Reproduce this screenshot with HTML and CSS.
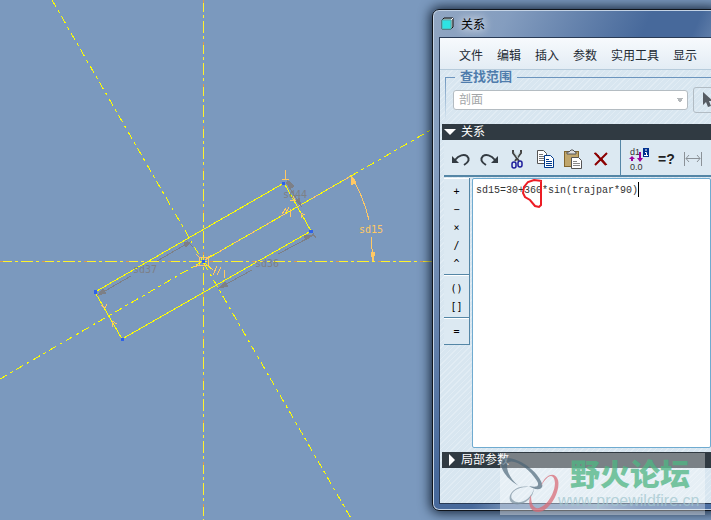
FILE: index.html
```html
<!DOCTYPE html>
<html lang="zh-CN">
<head>
  <meta charset="utf-8">
  <title>关系</title>
  <link rel="stylesheet" href="styles.css">
</head>
<body>
  <main class="workspace">
    <svg class="sketch" width="711" height="520" viewBox="0 0 711 520" role="img" aria-label="草绘">
      <!-- axes -->
      <g class="axis">
        <path d="M203 0V520M0 261H711"/>
        <path class="axis-tint" d="M203 0V520M0 261H711"/>
      </g>
      <g class="center-line">
        <path d="M52 0L352 520M0 379L203 261M351 176L455 116"/>
      </g>
      <!-- section -->
      <path class="outline" d="M95 292L284 183L311 231L122 339ZM203 261L351 176"/>
      <path class="tinted" d="M203 261L351 176"/>
      <!-- weak dimensions -->
      <g class="weak">
        <path d="M98 295L131 276M157 261L190 242M186 240L193 247M219 288L252 270M278 254L314 235M311 230L316 238M286 182L301 206"/>
        <path class="fill" d="M98 295L103 289L106 293ZM190 242L184 243L186 247ZM219 288L225 282L228 286ZM312 235L304 236L306 240ZM287 180L294 186L290 189ZM301 206L299 198L296 201Z"/>
        <text x="133" y="273">sd37</text>
        <text x="255" y="267">sd36</text>
        <text x="283" y="198">sd44</text>
      </g>
      <!-- angle dimension and constraints -->
      <g class="strong">
        <path d="M351 176Q363 195 369 220M371 237L373 261M285 170V179M282 179H289M101 305L105 308L107 304M112 327L112 321L117 324M290 200H295L293 196M301 218V213L305 215M282 214L286 208M285 214L289 207M290 209V217M213 275L217 266M217 275L221 267M224 270V278"/>
        <path class="fill" d="M351 176L356 182L352 185ZM373 261L371 252L375 252Z"/>
        <text x="359" y="233">sd15</text>
        <path d="M199 257H208V265H199ZM199 257L196 254M208 265L213 270M199 265L194 267M208 257L212 255"/>
      </g>
      <path class="outline" d="M203 261L196 265M203 261L211 269"/>
      <g class="points">
        <rect x="94" y="290" width="3" height="4"/>
        <rect x="121" y="338" width="3" height="3"/>
        <rect x="282" y="182" width="3" height="3"/>
        <rect x="309" y="230" width="4" height="3"/>
        <rect x="202" y="260" width="3" height="3"/>
      </g>
    </svg>

    <section class="dialog" aria-label="关系">
      <header class="title-bar">
        <svg width="13" height="13" viewBox="0 0 13 13" aria-hidden="true">
          <path d="M1 3L3 1H12V10L10 12H1Z" fill="#aab4b8" stroke="#111"/>
          <path d="M1 3H10V12H1Z" fill="#2de3e3" stroke="#5aa"/>
          <path d="M10 3L12 1" stroke="#fff"/>
        </svg>
        <span class="title">关系</span>
      </header>
      <div class="client">
        <nav class="menu">
          <button>文件</button>
          <button>编辑</button>
          <button>插入</button>
          <button>参数</button>
          <button>实用工具</button>
          <button>显示</button>
        </nav>
        <fieldset class="scope">
          <legend>查找范围</legend>
          <div class="scope-row">
            <select aria-label="查找范围" disabled>
              <option>剖面</option>
            </select>
            <button class="pick" aria-label="选取">
              <svg width="14" height="18" viewBox="0 0 14 18"><path d="M1 1V14L4 11L6 16L9 15L7 10H11Z" fill="#555b62"/></svg>
            </button>
          </div>
        </fieldset>
        <button class="section-bar" aria-expanded="true"><span class="arrow-down"></span>关系</button>
        <div class="toolbar">
          <div class="tools">
            <button aria-label="撤消">
              <svg width="20" height="20" viewBox="0 0 20 20"><path d="M1 7V14H8Z" fill="#333b42"/><path d="M4 11C8 6 13 5 16 7C19 10 18 13 13 16" fill="none" stroke="#333b42" stroke-width="2"/></svg>
            </button>
            <button aria-label="重做">
              <svg width="20" height="20" viewBox="0 0 20 20"><path d="M19 7V14H12Z" fill="#333b42"/><path d="M16 11C12 6 7 5 4 7C1 10 2 13 7 16" fill="none" stroke="#333b42" stroke-width="2"/></svg>
            </button>
            <button aria-label="剪切">
              <svg width="20" height="20" viewBox="0 0 20 20" fill="none"><path d="M6 1V4L12 12M14 1V4L8 12" stroke="#444" stroke-width="2"/><path d="M7 3L11 9M13 3L10 8" stroke="#bcc"/><rect x="5" y="13" width="4" height="6" rx="2" stroke="#1d1d9c" stroke-width="1.5"/><rect x="11" y="12" width="4" height="6" rx="2" stroke="#1d1d9c" stroke-width="1.5"/></svg>
            </button>
            <button aria-label="复制">
              <svg width="20" height="20" viewBox="0 0 20 20"><path d="M2.500 1.500H8.500L11.500 4.500V14.500H2.500Z" fill="#fff" stroke="#555"/><path d="M4 5.500H8M4 7.500H9M4 9.500H9M4 11.500H9" stroke="#777"/><path d="M9.500 6.500H15.500L18.500 9.500V18.500H9.500Z" fill="#fff" stroke="#003a8c"/><path d="M11 10.500H14M11 12.500H17M11 14.500H17M11 16.500H17" stroke="#003a8c"/></svg>
            </button>
            <button aria-label="粘贴">
              <svg width="20" height="20" viewBox="0 0 20 20"><rect x="1.500" y="2.500" width="14" height="15" fill="#c0a66c" stroke="#82662e"/><path d="M4 5V3H6L8 1H10L12 3H13V5Z" fill="#ddd" stroke="#555"/><path d="M8.500 8.500H15.500L18.500 11.500V19.500H8.500Z" fill="#fff" stroke="#555"/><path d="M10 12.500H14M10 14.500H17M10 16.500H17" stroke="#888"/></svg>
            </button>
            <button aria-label="删除">
              <svg width="20" height="20" viewBox="0 0 20 20"><path d="M4 4L15 16M16 4L4 16" stroke="#8b0000" stroke-width="2"/><path d="M3 4L8 7M11 10L16 16" stroke="#8b0000"/></svg>
            </button>
          </div>
          <div class="tools">
            <button aria-label="切换尺寸">
              <svg width="22" height="24" viewBox="0 0 22 24"><text class="glyph" x="2" y="8">d1</text><text class="glyph" x="2" y="23">0.0</text><path d="M4 10V14M12 5V12" stroke="#9b009b" stroke-width="2"/><path d="M1 12L4 9L7 12ZM9 11H15L12 15Z" fill="#9b009b"/><rect x="15" y="1" width="6" height="9" fill="#00308f"/><path d="M18 2V4M17 5.500H18.500V8M16 8.500H20" stroke="#fff" fill="none"/></svg>
            </button>
            <button class="eval" aria-label="计算">=?</button>
            <button aria-label="测量">
              <svg width="20" height="20" viewBox="0 0 20 20" fill="none" stroke="#8b9298"><path d="M1.500 3V17M18.500 3V17M3 9.500H17M6 6L3 9.500L6 13M14 6L17 9.500L14 13"/></svg>
            </button>
          </div>
        </div>
        <div class="editor">
          <div class="operators">
            <div class="group">
              <button>+</button><button>−</button><button>×</button><button>/</button><button>^</button>
            </div>
            <div class="group">
              <button>()</button><button>[]</button>
            </div>
            <div class="group">
              <button>=</button>
            </div>
          </div>
          <div class="code">
            <textarea aria-label="关系式" spellcheck="false">sd15=30+360*sin(trajpar*90)</textarea>
            <span class="caret"></span>
            <!-- red pen mark round the amplitude -->
            <svg class="pen" width="24" height="34" viewBox="0 0 24 34" aria-hidden="true"><path d="M20 3L12 2L6 4L2 9L1 15L3 19L8 22L13 28L17 29L19 27V3" /></svg>
          </div>
        </div>
        <button class="section-bar" aria-expanded="false"><span class="arrow-right"></span>局部参数</button>
      </div>
    </section>

    <aside class="watermark">
      <svg width="66" height="62" viewBox="0 0 66 62" aria-hidden="true">
        <path d="M19 33C-1 22 -4 3 9 5C29 8 45 29 42 34C40 38 33 36 29 33C37 35 40 33 37 28C30 16 15 6 9 9C4 12 9 26 19 33Z" fill="#496477" opacity=".9"/>
        <path d="M29 34C14 33 8 43 13 47C19 53 32 46 34 35C34 47 18 56 11 49C6 43 15 31 29 34Z" fill="#8296a4"/>
        <path d="M41 33C45 21 55 18 58 27C61 39 49 59 38 59C30 59 27 50 31 42C31 52 34 56 39 55C50 52 59 31 53 24C50 21 46 25 41 33Z" fill="#d96d78"/>
      </svg>
      <div class="watermark-text">
        <strong>野火论坛</strong>
        <span>www.proewildfire.cn</span>
      </div>
    </aside>
  </main>
</body>
</html>
```

FILE: styles.css
```css
* {
  box-sizing: border-box;
}

body {
  margin: 0;
  background: #7b99be;
  font-family: "Liberation Sans", "Noto Sans CJK SC", sans-serif;
  font-size: 12px;
}

button {
  padding: 0;
  border: none;
  background: none;
  font: inherit;
  color: inherit;
}

.workspace {
  position: relative;
  height: 100vh;
  overflow: hidden;
}

/* Sketch */
.sketch {
  display: block;
  fill: none;
  shape-rendering: crispEdges;
}

.axis {
  stroke: #fff22c;
  stroke-dasharray: 12 3 3 3;
}

.axis-tint {
  stroke: #d99a4c;
  stroke-dasharray: 3 39;
}

.center-line {
  stroke: #ff0;
  stroke-dasharray: 8 4 3 4;
}

.outline {
  stroke: #ff0;
}

.tinted {
  stroke: #ffc864;
  stroke-dasharray: 6 12;
}

.weak {
  stroke: #7d8087;
}

.weak .fill,
.weak text {
  fill: #7d8087;
}

.strong {
  stroke: #ffc864;
}

.strong .fill,
.strong text {
  fill: #ffc864;
}

.sketch text {
  stroke: none;
  font-family: "DejaVu Sans Mono", monospace;
  font-size: 10px;
}

.points {
  fill: #2f62e8;
}

/* Dialog window */
.dialog {
  position: absolute;
  top: 9px;
  right: -8px;
  bottom: 9px;
  left: 432px;
  display: flex;
  flex-direction: column;
  padding: 0 6px 6px;
  border: 1px solid #10151c;
  border-radius: 7px;
  background: linear-gradient(115deg, #91a6c2 0, #849dbf 70px, #47699b 200px, #47699b 245px, #6684ad 270px, #7995b9 360px, #4c6fa3 400px);
  box-shadow: inset 0 0 0 1px #c4d3e5, 0 0 12px 2px #17263a;
}

.title-bar {
  display: flex;
  align-items: center;
  gap: 7px;
  height: 27px;
  padding-left: 2px;
}

.title {
  text-shadow: 0 0 8px #fff, 0 0 12px #fff;
}

.client {
  flex: 1;
  display: flex;
  flex-direction: column;
  min-height: 0;
  border: 1px solid #283a55;
  background: repeating-linear-gradient(135deg, #d8e6f0 0, #d8e6f0 3px, #e1ecf4 3px, #e1ecf4 4px);
}

.menu {
  display: flex;
  gap: 14px;
  height: 32px;
  padding: 2px 0 0 19px;
  border-bottom: 1px solid #b6cbdb;
  background: linear-gradient(#f7fafd, #e3ecf4);
  color: #222a33;
  white-space: nowrap;
}

.scope {
  min-width: 0;
  height: 49px;
  margin: 0 -20px 5px 5px;
  padding: 0 7px;
  border: 1px solid #6b94bd;
  border-bottom: none;
  border-image: linear-gradient(#6b94bd, #d8e6f0) 1;
}

.scope legend {
  height: 14px;
  margin-left: 2px;
  padding: 0 5px;
  color: #4f7cac;
  font-size: 13px;
  font-weight: bold;
  line-height: 14px;
}

.scope-row {
  display: flex;
  align-items: center;
  gap: 5px;
  padding-top: 3px;
}

.scope select {
  appearance: none;
  flex-shrink: 0;
  width: 235px;
  height: 20px;
  padding: 0 5px;
  border: 1px solid #b4bcc2;
  border-radius: 3px;
  background: linear-gradient(#b4b8bb, #b4b8bb) 223px 7px / 6px 1px no-repeat,
    linear-gradient(#b4b8bb, #b4b8bb) 224px 8px / 4px 2px no-repeat,
    linear-gradient(#b4b8bb, #b4b8bb) 225px 10px / 2px 1px no-repeat,
    #fff;
  color: #a3a6a8;
  font: inherit;
  opacity: 1;
}

.pick {
  display: flex;
  align-items: center;
  flex-shrink: 0;
  width: 32px;
  height: 26px;
  padding-left: 8px;
  border: 1px solid #b2bcc4;
  border-radius: 3px;
}

.section-bar {
  display: flex;
  align-items: center;
  gap: 5px;
  height: 16px;
  flex-shrink: 0;
  margin-left: 2px;
  padding-left: 2px;
  background: #303a42;
  color: #fff;
  line-height: 16px;
}

.arrow-down {
  border: 6px solid transparent;
  border-top-color: #fff;
  border-bottom: none;
}

.arrow-right {
  margin: 0 1px 0 5px;
  border: 6px solid transparent;
  border-left-color: #fff;
  border-right: none;
}

.toolbar {
  display: flex;
  height: 37px;
  margin-left: 4px;
  border-bottom: 2px solid #5486a6;
  background: #dce9f2;
}

.tools {
  display: flex;
  align-items: center;
  gap: 8px;
  padding: 2px 9px 0 7px;
}

.tools + .tools {
  border-left: 1px solid #5486a6;
}

.tools button {
  height: 24px;
  display: flex;
  align-items: center;
}

.glyph {
  fill: #333;
  font-size: 9px;
}

.tools .eval {
  color: #222;
  font-size: 14px;
  font-weight: bold;
}

.editor {
  flex: 1;
  display: flex;
  gap: 2px;
  min-height: 0;
  margin: 1px 0 4px 4px;
}

.operators {
  align-self: flex-start;
  width: 26px;
  border-right: 1px solid #5486a6;
  background: #dce9f2;
  font-family: "DejaVu Sans Mono", monospace;
  font-size: 10px;
}

.group {
  display: flex;
  flex-direction: column;
  padding: 3px 0 2px;
  border-top: 1px solid #fff;
  border-bottom: 1px solid #5486a6;
}

.group:last-child {
  padding-bottom: 4px;
}

.group button {
  height: 18px;
}

.code {
  position: relative;
  flex: 1;
}

.code textarea {
  display: block;
  width: 100%;
  height: 100%;
  padding: 5px 3px;
  border: 1px solid #6fabd0;
  border-radius: 2px;
  background: #fff;
  color: #333;
  font: 10px/14px "Liberation Mono", monospace;
  resize: none;
}

.caret {
  position: absolute;
  top: 4px;
  left: 166px;
  width: 1px;
  height: 15px;
  background: #000;
}

.pen {
  position: absolute;
  top: 0;
  left: 50px;
  fill: none;
  stroke: #ed1c24;
  stroke-width: 2;
}

.client > .section-bar:last-child {
  margin-bottom: 35px;
}

/* Forum watermark */
.watermark {
  position: absolute;
  right: 6px;
  bottom: 5px;
  display: flex;
  width: 205px;
  height: 62px;
  background: rgba(255, 255, 255, 0.36);
  white-space: nowrap;
}

.watermark svg {
  flex-shrink: 0;
  opacity: 0.75;
}

.watermark-text {
  display: flex;
  flex-direction: column;
  margin-left: -8px;
  opacity: 0.75;
}

.watermark strong {
  margin-left: 12px;
  color: #4fb583;
  font-family: "Noto Sans CJK SC", sans-serif;
  font-size: 30px;
  font-weight: 900;
  line-height: 38px;
}

.watermark span {
  color: #a3c7cf;
  font-size: 16px;
  line-height: 20px;
}
```
